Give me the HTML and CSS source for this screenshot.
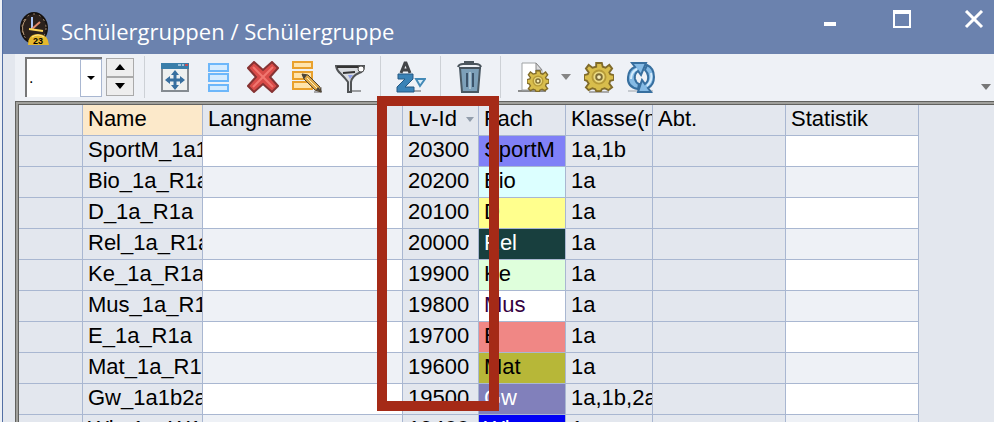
FILE: index.html
```
<!DOCTYPE html>
<html lang="de">
<head>
  <meta charset="UTF-8">
  <meta name="viewport" content="width=device-width, initial-scale=1.0">
  <title>Schülergruppen / Schülergruppe</title>
  <link rel="stylesheet" href="styles.css">
</head>
<body>
  <div class="window">
    <header class="titlebar">
      <svg class="app-icon" width="30" height="34" viewBox="0 0 30 34">
        <ellipse cx="14" cy="16" rx="14" ry="16" fill="#15110f"/>
        <ellipse cx="14" cy="16" rx="12" ry="14" fill="#2b211c" stroke="#a58b70" stroke-width="1" stroke-dasharray="2 4"/>
        <path d="M4 23A12 14 0 0 1 6 7" fill="none" stroke="#b99a78"/>
        <path d="M12 17V5" stroke="#a9c4f4" stroke-width="2"/>
        <path d="M12 17l8-7" stroke="#e08a6c" stroke-width="2"/>
        <path d="M9 17l14 2" stroke="#ffd75a" stroke-width="2"/>
        <path d="M8 33q0-11 10-11t11 11z" fill="#e6b82c"/>
        <path d="M12 25q6-4 12 0" fill="none" stroke="#ffe790"/>
        <text x="13" y="32" class="app-icon-day">23</text>
      </svg>
      <h1 class="title">Schülergruppen / Schülergruppe</h1>
      <div class="window-buttons">
        <button class="window-button" aria-label="Minimieren">
          <svg width="20" height="20" viewBox="0 0 20 20"><path d="M4 12h12v4H4z" fill="#fff"/></svg>
        </button>
        <button class="window-button" aria-label="Maximieren">
          <svg width="20" height="20" viewBox="0 0 20 20"><path fill-rule="evenodd" d="M1 0h18v18H1zM3 4v12h14V4z" fill="#fff"/></svg>
        </button>
        <button class="window-button" aria-label="Schließen">
          <svg width="20" height="20" viewBox="0 0 20 20"><path d="M2 1l16 16M18 1L2 17" stroke="#fff" stroke-width="3"/></svg>
        </button>
      </div>
    </header>

    <main class="content">
      <div class="toolbar">
        <div class="combo">
          <input class="combo-input" type="text" value="." aria-label="Auswahl">
          <button class="combo-button" aria-label="Liste öffnen">
            <svg width="8" height="4" viewBox="0 0 8 4"><path d="M0 0h8L4 4z"/></svg>
          </button>
        </div>
        <div class="spinner">
          <button class="spin-button" aria-label="Vorheriges Element">
            <svg width="10" height="6" viewBox="0 0 10 6"><path d="M0 6h10L5 0z"/></svg>
          </button>
          <button class="spin-button" aria-label="Nächstes Element">
            <svg width="10" height="6" viewBox="0 0 10 6"><path d="M0 0h10L5 6z"/></svg>
          </button>
        </div>

        <div class="tools tools-edit">
          <button class="tool" aria-label="Fenster anpassen">
            <svg width="32" height="32" viewBox="0 0 32 32">
              <path d="M3 3h26v27H3z" fill="#eef0f0" stroke="#858b91" stroke-width="2"/>
              <path d="M2 2h28v6H2z" fill="#397eaa"/>
              <path d="M19 3h3v2h-3zM23 3h2v2h-2z" fill="#9bc0da"/><path d="M26 3h3v2h-3z" fill="#c34d55"/>
              <path d="M16 12v15M8 19h16" stroke="#386f9f" stroke-width="3"/>
              <path d="M16 9l4 5h-8zM16 29l4-5h-8zM6 19l5-4v8zM26 19l-5-4v8z" fill="#386f9f"/>
            </svg>
          </button>
          <button class="tool" aria-label="Neue Zeile">
            <svg width="32" height="32" viewBox="0 0 32 32">
              <g fill="#d4ebff" stroke="#6db7fa" stroke-width="2">
                <path d="M6 3h19v7H6zM6 13h19v7H6zM6 24h19v6H6z"/>
              </g>
            </svg>
          </button>
          <button class="tool" aria-label="Löschen">
            <svg width="32" height="32" viewBox="0 0 32 32">
              <path d="M7 1l9 8 9-8 6 6-8 9 8 9-6 6-9-8-9 8-6-6 8-9-8-9z" fill="#d94b48" stroke="#863333" stroke-width="2"/>
              <path d="M6 6l20 20M26 6L6 26" stroke="#f17770" stroke-width="2"/>
            </svg>
          </button>
          <button class="tool" aria-label="Bearbeiten">
            <svg width="32" height="32" viewBox="0 0 32 32">
              <g fill="#ffe4ac" stroke="#e9a12d" stroke-width="2">
                <path d="M2 1h19v6H2zM2 11h19v7H2zM2 21h19v7H2z"/>
              </g>
              <path d="M23 30l8-4v6h-8z" fill="#a8a8aa"/>
              <path d="M11 13l6 1 12 12 1 5-6-2-11-11z" fill="#dda94b" stroke="#51442f"/>
              <path d="M11 13l5 1-3 4zM27 26l4 5-6-2z" fill="#4a453c"/><path d="M16 17l10 10" stroke="#fff0bd"/>
            </svg>
          </button>
          <button class="tool" aria-label="Filter">
            <svg width="32" height="32" viewBox="0 0 32 32">
              <path d="M14 29h12v2H14z" fill="#9c9ea1"/>
              <path d="M1 5h28q0 6-5 7-7 3-8 9v10h-3V21Q10 17 6 13 2 10 1 5z" fill="#d8dbdf" stroke="#515456" stroke-width="2"/>
              <path d="M2 6h22M8 12l12-1" stroke="#333" stroke-width="2"/>
              <circle cx="26" cy="8" r="3" fill="#fff" stroke="#555"/><path d="M13 14h5l-3 4z" fill="#8b9dea"/>
            </svg>
          </button>
        </div>

        <div class="tools tools-sort">
          <button class="tool" aria-label="Sortieren">
            <svg width="32" height="32" viewBox="0 0 32 32">
              <path d="M18 29h9v2h-9z" fill="#a5a8ac"/>
              <path d="M7 12l4-10h1l4 10M9 9h6" fill="none" stroke="#424548" stroke-width="3"/>
              <path d="M4 13h15v5l-8 8h9v5H3v-5l8-8H4z" fill="#3a83b7" stroke="#245983"/>
              <path d="M22 18h9l-5 7z" fill="#d8ecf8" stroke="#438ab7" stroke-width="2"/>
            </svg>
          </button>
        </div>

        <div class="tools tools-trash">
          <button class="tool" aria-label="Papierkorb">
            <svg width="32" height="32" viewBox="0 0 32 32">
              <path d="M11 4V1h8v3M4 6q1-3 5-3h13q4 0 5 3" fill="none" stroke="#4b555d" stroke-width="2"/>
              <path d="M6 7h20l-2 24H8z" fill="#7da0b9" stroke="#4a5964" stroke-width="2"/>
              <path d="M5 7h22" stroke="#46525c" stroke-width="2"/>
              <path d="M13 12v14M19 12v14" stroke="#3c536a" stroke-width="2"/><path d="M16 11v17" stroke="#a9c2d2" stroke-width="2"/>
            </svg>
          </button>
        </div>

        <div class="tools tools-settings">
          <button class="tool" aria-label="Seiteneinstellungen">
            <svg width="32" height="32" viewBox="0 0 32 32">
              <path d="M1 29h28v2H1z" fill="#8b8c8c"/>
              <path d="M5 2h14l6 7v20H5z" fill="#fff" stroke="#a0a3a5"/><path d="M19 2v7h6z" fill="#ddd" stroke="#888"/>
              <use href="#gear" x="10" y="9" width="22" height="22"/>
            </svg>
          </button>
          <button class="tool-arrow" aria-label="Weitere Seiteneinstellungen">
            <svg width="10" height="6" viewBox="0 0 10 6"><path d="M0 0h10L5 6z"/></svg>
          </button>
          <button class="tool" aria-label="Einstellungen">
            <svg width="32" height="32" viewBox="0 0 32 32">
              <path d="M6 30h20v2H6z" fill="#aaa"/>
              <symbol id="gear" viewBox="0 0 32 32">
                <path d="M13 1h6l1 4 3 1 4-3 3 4-3 4 1 2 4 1v5l-4 1-1 3 3 4-4 3-4-2-3 1-1 2h-5l-1-2-3-1-4 2-3-3 3-4-2-3-3-1v-5l4-1 1-2-3-4 3-4 4 3 4-1z" fill="#d8bd4c" stroke="#806b2a" stroke-width="2"/>
                <circle cx="16" cy="16" r="7" fill="#ead980" stroke="#b69a37" stroke-width="2"/>
                <circle cx="16" cy="16" r="3" fill="#f7edb9" stroke="#7d6c35" stroke-width="2"/>
              </symbol>
              <use href="#gear" x="1" y="1" width="30" height="30"/>
            </svg>
          </button>
          <button class="tool" aria-label="Aktualisieren">
            <svg width="32" height="32" viewBox="0 0 32 32">
              <path d="M3 29h25v2H3z" fill="#c5cad0"/>
              <path d="M13 28Q2 26 3 16 4 8 10 6L7 2h14l-5 12-3-4q-4 3-3 8 1 4 4 5z" fill="#86bbe5" stroke="#376f9f" stroke-width="2"/>
              <path d="M22 4q7 3 7 12 0 8-6 11l3 4H13l4-12 3 4q4-3 3-8 0-3-3-6z" fill="#86bbe5" stroke="#376f9f" stroke-width="2"/>
              <path d="M6 18q0-7 6-10M26 12q2 7-4 13" fill="none" stroke="#d5ecfc" stroke-width="2"/>
            </svg>
          </button>
        </div>
        <button class="overflow" aria-label="Weitere Befehle">
          <svg width="10" height="6" viewBox="0 0 10 6"><path d="M0 0h10L5 6z"/></svg>
        </button>
      </div>

      <div class="grid-frame">
        <div class="grid-body">
          <table class="groups">
            <colgroup>
              <col class="col-marker"><col class="col-name"><col class="col-longname"><col class="col-id">
              <col class="col-subject"><col class="col-class"><col class="col-dept"><col class="col-stats">
            </colgroup>
            <thead>
              <tr>
                <th></th><th class="sorted">Name</th><th>Langname</th>
                <th><span class="id-head">Lv-Id <svg width="8" height="5" viewBox="0 0 8 5"><path d="M0 0h8L4 5z" fill="#929dab"/></svg></span></th>
                <th>Fach</th><th>Klasse(n)</th><th>Abt.</th><th>Statistik</th>
              </tr>
            </thead>
            <tbody>
              <tr><td></td><td>SportM_1a1b</td><td class="editable"></td><td>20300</td><td class="sport">SportM</td><td>1a,1b</td><td></td><td class="editable"></td></tr>
              <tr><td></td><td>Bio_1a_R1a</td><td class="editable"></td><td>20200</td><td class="bio">Bio</td><td>1a</td><td></td><td class="editable"></td></tr>
              <tr><td></td><td>D_1a_R1a</td><td class="editable"></td><td>20100</td><td class="german">D</td><td>1a</td><td></td><td class="editable"></td></tr>
              <tr><td></td><td>Rel_1a_R1a</td><td class="editable"></td><td>20000</td><td class="religion">Rel</td><td>1a</td><td></td><td class="editable"></td></tr>
              <tr><td></td><td>Ke_1a_R1a</td><td class="editable"></td><td>19900</td><td class="ceramics">Ke</td><td>1a</td><td></td><td class="editable"></td></tr>
              <tr><td></td><td>Mus_1a_R1a</td><td class="editable"></td><td>19800</td><td class="music">Mus</td><td>1a</td><td></td><td class="editable"></td></tr>
              <tr><td></td><td>E_1a_R1a</td><td class="editable"></td><td>19700</td><td class="english">E</td><td>1a</td><td></td><td class="editable"></td></tr>
              <tr><td></td><td>Mat_1a_R1a</td><td class="editable"></td><td>19600</td><td class="maths">Mat</td><td>1a</td><td></td><td class="editable"></td></tr>
              <tr><td></td><td>Gw_1a1b2a</td><td class="editable"></td><td>19500</td><td class="geo">Gw</td><td>1a,1b,2a</td><td></td><td class="editable"></td></tr>
              <tr><td></td><td>Wk_1a_W1a</td><td class="editable"></td><td>19400</td><td class="crafts">Wk</td><td>1a</td><td></td><td class="editable"></td></tr>
            </tbody>
          </table>
        </div>
        <div class="highlight"></div>
      </div>
    </main>
  </div>
</body>
</html>
```

FILE: styles.css
```
:root {
  --blue: #6b82ae;
  --panel: #e3e7ee;
  --toolbar: #eef1f6;
  --line: #a9b7d1;
  --mark: #a52a17;
}

* {
  box-sizing: border-box;
}

body {
  margin: 0;
  height: 100vh;
  overflow: hidden;
  background: #edf0f5;
  color: #000;
  font-family: "Liberation Sans", Arial, sans-serif;
}

button {
  padding: 0;
  border: 0;
  background: transparent;
  display: flex;
  align-items: center;
  justify-content: center;
}

svg {
  display: block;
  flex: none;
}

.window {
  height: 100%;
  margin-left: 2px;
  border-left: 1px solid #536fa4;
  display: flex;
  flex-direction: column;
  background: var(--panel);
}

.titlebar {
  height: 54px;
  flex: none;
  padding: 12px 10px 0 17px;
  display: flex;
  align-items: flex-start;
  background: var(--blue);
}

.app-icon-day {
  font-size: 9px;
  font-weight: bold;
}

.title {
  margin: 3px 0 0 11px;
  color: #fff;
  font: 22px/32px "Open Sans", "Noto Sans", sans-serif;
}

.window-buttons {
  margin-left: auto;
  margin-top: -2px;
  display: flex;
  gap: 52px;
}

.content {
  flex: 1;
  min-height: 0;
  margin-left: 12px;
  display: flex;
  flex-direction: column;
}

.toolbar {
  height: 47px;
  flex: none;
  padding: 0 3px 2px 10px;
  display: flex;
  align-items: center;
  background: var(--toolbar);
}

.combo {
  width: 77px;
  height: 40px;
  display: flex;
  border-top: 2px solid #777;
  border-left: 2px solid #777;
  background: #fff;
}

.combo-input {
  flex: 1;
  min-width: 0;
  padding: 0 2px;
  border: 0;
  background: #fff;
  font: 16px "Liberation Sans", Arial, sans-serif;
}

.combo-button {
  width: 22px;
  border: 1px solid var(--line);
}

.spinner {
  width: 28px;
  height: 38px;
  margin-left: 4px;
  display: grid;
  grid-template-rows: 1fr 1fr;
}

.spin-button {
  border: 1px solid #aaa;
  background: #eee;
}

.tools {
  height: 42px;
  display: flex;
  align-items: center;
  border-left: 1px solid #cdd1d6;
}

.tool {
  width: 32px;
  height: 32px;
}

.tools-edit {
  margin-left: 10px;
  padding: 0 13px 0 14px;
  gap: 12px;
}

.tools-sort,
.tools-trash {
  padding: 0 14px 0 13px;
}

.tools-settings {
  padding-left: 16px;
}

.tool-arrow {
  width: 34px;
  height: 32px;
  fill: #858585;
}

.tools-settings .tool + .tool {
  margin-left: 10px;
}

.overflow {
  width: 10px;
  height: 32px;
  margin-left: auto;
  padding-top: 20px;
  fill: #777;
}

.grid-frame {
  position: relative;
  flex: 1;
  min-height: 0;
  border-top: 4px double #62625f;
  border-left: 4px double #62625f;
  background: #a0a09c;
}

.grid-body {
  height: 100%;
  overflow: hidden;
  background: var(--panel);
}

.groups {
  width: 900px;
  table-layout: fixed;
  border-collapse: separate;
  border-spacing: 0;
}

.col-marker { width: 64px; }
.col-name { width: 120px; }
.col-longname { width: 200px; }
.col-id { width: 76px; }
.col-subject { width: 87px; }
.col-class { width: 87px; }
.col-dept { width: 133px; }
.col-stats { width: 133px; }

.groups th,
.groups td {
  height: 31px;
  padding: 0 0 2px 5px;
  border-right: 1px solid var(--line);
  border-bottom: 1px solid var(--line);
  background: var(--panel);
  font-size: 22px;
  line-height: 28px;
  font-weight: normal;
  text-align: left;
  white-space: nowrap;
  overflow: hidden;
}

.groups .sorted {
  background: #fce9ca;
}

.id-head {
  display: flex;
  align-items: center;
  justify-content: space-between;
  padding-right: 4px;
}

.groups .editable {
  background: #fff;
}

.groups tr:nth-child(even) .editable {
  background: #eef1f6;
}

.groups .sport { background: #8080f7; }
.groups .bio { background: #dcffff; }
.groups .german { background: #ffff8d; }
.groups .religion { background: #183f3e; color: #fff; }
.groups .ceramics { background: #dfffdc; }
.groups .music { background: #fff; color: #350040; }
.groups .english { background: #f08785; }
.groups .maths { background: #b7b738; }
.groups .geo { background: #8180bb; color: #fff; }
.groups .crafts { background: #0000f5; color: #fff; }

/* Frame round the id column */
.highlight {
  position: absolute;
  top: -9px;
  left: 358px;
  width: 122px;
  height: 315px;
  border: 10px solid var(--mark);
  pointer-events: none;
}
```
